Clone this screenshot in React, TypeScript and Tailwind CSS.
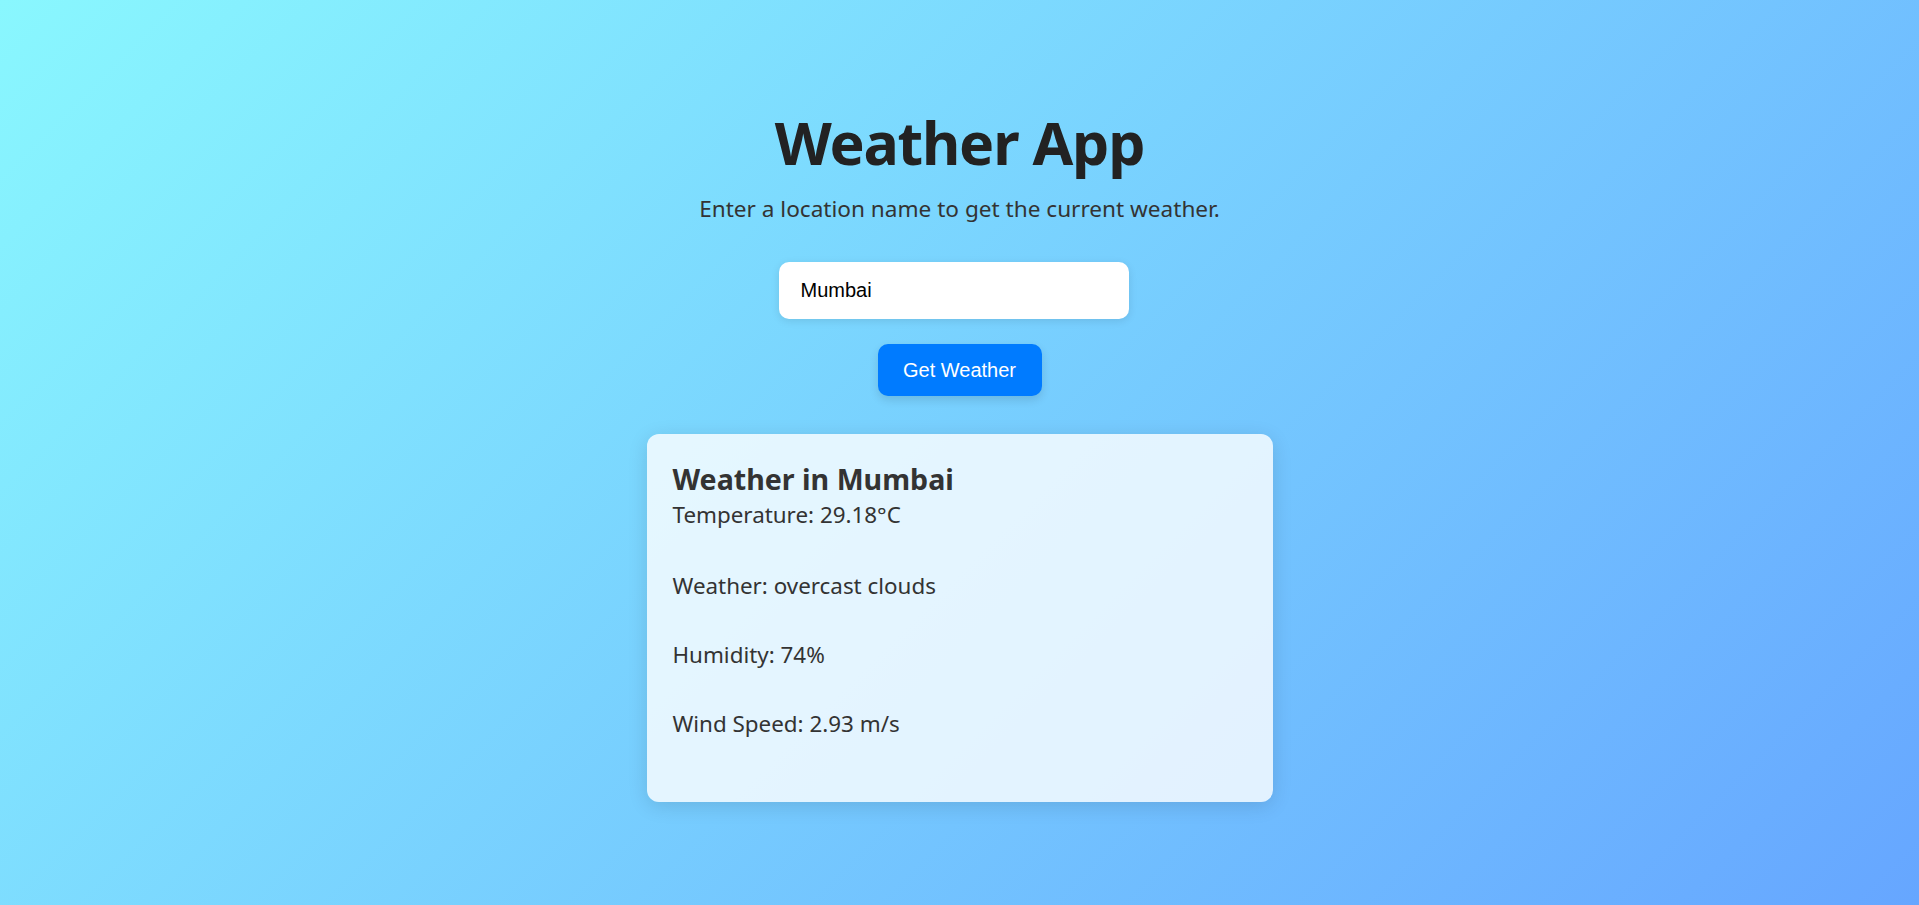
import { useState } from "react";

const weather = {
  city: "Mumbai",
  temp: "29.18",
  description: "overcast clouds",
  humidity: 74,
  wind: "2.93",
};

export default function App() {
  const [city, setCity] = useState("Mumbai");

  return (
    <div className="min-h-screen w-full bg-[linear-gradient(135deg,#89f7fe_0%,#66a6ff_100%)] font-['Noto_Sans',sans-serif] flex flex-col items-center pt-[112px] pb-10">
      <h1 className="text-[59px] leading-[60px] font-bold tracking-[-1.2px] text-[#222]">Weather App</h1>
      <p className="mt-[22px] text-[22.6px] leading-[30px] text-[#333]">
        Enter a location name to get the current weather.
      </p>

      <input
        type="text"
        value={city}
        onChange={(e) => setCity(e.target.value)}
        placeholder="Enter location"
        className="mt-[38px] mr-[12px] w-[350px] h-[57px] rounded-[10px] bg-white pl-[22px] pr-3 font-['Liberation_Sans',Arial,sans-serif] text-[20px] text-black outline-none shadow-[0_2px_8px_rgba(0,0,0,0.1)]"
      />

      <button
        type="button"
        className="mt-[25px] w-[164px] h-[52px] rounded-[10px] bg-[#007bff] text-white font-['Liberation_Sans',Arial,sans-serif] text-[20px] shadow-[0_4px_10px_rgba(0,0,0,0.12)]"
      >
        Get Weather
      </button>

      <div className="mt-[38px] w-[626px] rounded-[12px] bg-white/80 px-[26px] pt-[27px] pb-[64px] text-[#333] shadow-[0_4px_20px_rgba(0,0,0,0.12)]">
        <h2 className="text-[28.6px] leading-[36px] font-bold">Weather in {weather.city}</h2>
        <p className="mt-[4px] text-[22.4px] leading-[28px]">Temperature: {weather.temp}°C</p>
        <p className="mt-[43px] text-[22.4px] leading-[28px]">Weather: {weather.description}</p>
        <p className="mt-[41px] text-[22.4px] leading-[28px]">Humidity: {weather.humidity}%</p>
        <p className="mt-[41px] text-[22.4px] leading-[28px]">Wind Speed: {weather.wind} m/s</p>
      </div>
    </div>
  );
}
